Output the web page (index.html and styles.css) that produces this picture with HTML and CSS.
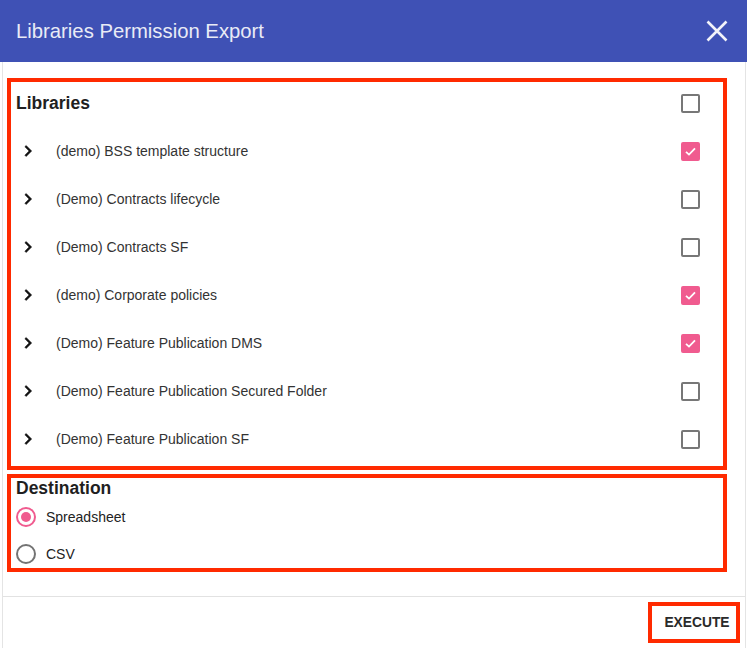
FILE: index.html
```html
<!DOCTYPE html>
<html>
<head>
<meta charset="utf-8">
<link rel="stylesheet" href="styles.css">
</head>
<body>
<div class="dialog">
  <div class="header">
    <span class="title">Libraries Permission Export</span>
    <svg class="close" width="22" height="22" viewBox="0 0 22 22"><path d="M1.5 1.5L20.5 20.5M20.5 1.5L1.5 20.5" stroke="#f2f3fa" stroke-width="2.6" fill="none"/></svg>
  </div>
  <div class="body">
    <div class="content">
      <div class="box libraries">
        <div class="lib-head">
          <span class="heading">Libraries</span>
          <span class="cb"></span>
        </div>
        <div class="row">
          <svg class="chev" width="22" height="22" viewBox="0 0 24 24"><path d="M10 6L8.59 7.41 13.17 12l-4.58 4.59L10 18l6-6z" fill="#111" stroke="#111" stroke-width="0.6"/></svg>
          <span class="label">(demo) BSS template structure</span>
          <span class="cb checked"><svg width="13" height="13" viewBox="0 0 13 13"><path d="M2 6.8L5 9.6L11 3.4" stroke="#fff" stroke-width="1.8" fill="none"/></svg></span>
        </div>
        <div class="row">
          <svg class="chev" width="22" height="22" viewBox="0 0 24 24"><path d="M10 6L8.59 7.41 13.17 12l-4.58 4.59L10 18l6-6z" fill="#111" stroke="#111" stroke-width="0.6"/></svg>
          <span class="label">(Demo) Contracts lifecycle</span>
          <span class="cb"></span>
        </div>
        <div class="row">
          <svg class="chev" width="22" height="22" viewBox="0 0 24 24"><path d="M10 6L8.59 7.41 13.17 12l-4.58 4.59L10 18l6-6z" fill="#111" stroke="#111" stroke-width="0.6"/></svg>
          <span class="label">(Demo) Contracts SF</span>
          <span class="cb"></span>
        </div>
        <div class="row">
          <svg class="chev" width="22" height="22" viewBox="0 0 24 24"><path d="M10 6L8.59 7.41 13.17 12l-4.58 4.59L10 18l6-6z" fill="#111" stroke="#111" stroke-width="0.6"/></svg>
          <span class="label">(demo) Corporate policies</span>
          <span class="cb checked"><svg width="13" height="13" viewBox="0 0 13 13"><path d="M2 6.8L5 9.6L11 3.4" stroke="#fff" stroke-width="1.8" fill="none"/></svg></span>
        </div>
        <div class="row">
          <svg class="chev" width="22" height="22" viewBox="0 0 24 24"><path d="M10 6L8.59 7.41 13.17 12l-4.58 4.59L10 18l6-6z" fill="#111" stroke="#111" stroke-width="0.6"/></svg>
          <span class="label">(Demo) Feature Publication DMS</span>
          <span class="cb checked"><svg width="13" height="13" viewBox="0 0 13 13"><path d="M2 6.8L5 9.6L11 3.4" stroke="#fff" stroke-width="1.8" fill="none"/></svg></span>
        </div>
        <div class="row">
          <svg class="chev" width="22" height="22" viewBox="0 0 24 24"><path d="M10 6L8.59 7.41 13.17 12l-4.58 4.59L10 18l6-6z" fill="#111" stroke="#111" stroke-width="0.6"/></svg>
          <span class="label">(Demo) Feature Publication Secured Folder</span>
          <span class="cb"></span>
        </div>
        <div class="row">
          <svg class="chev" width="22" height="22" viewBox="0 0 24 24"><path d="M10 6L8.59 7.41 13.17 12l-4.58 4.59L10 18l6-6z" fill="#111" stroke="#111" stroke-width="0.6"/></svg>
          <span class="label">(Demo) Feature Publication SF</span>
          <span class="cb"></span>
        </div>
      </div>
      <div class="box destination">
        <div class="dest-head">Destination</div>
        <div class="radio-row first">
          <span class="radio on"></span>
          <span class="rlabel">Spreadsheet</span>
        </div>
        <div class="radio-row second">
          <span class="radio"></span>
          <span class="rlabel">CSV</span>
        </div>
      </div>
    </div>
    <div class="footer">
      <button class="execute">EXECUTE</button>
    </div>
  </div>
</div>
</body>
</html>
```
FILE: styles.css
```css
html, body {
  margin: 0;
  padding: 0;
  background: #fff;
  font-family: "Liberation Sans", Arial, Helvetica, sans-serif;
}
.dialog {
  width: 747px;
  height: 648px;
  display: flex;
  flex-direction: column;
  background: #fff;
}
.header {
  height: 62px;
  flex: none;
  background: #3f51b5;
  display: flex;
  align-items: center;
  justify-content: space-between;
  padding: 0 19px 0 16px;
  box-sizing: border-box;
}
.title {
  color: #e9ebf6;
  font-size: 20.3px;
  line-height: 24px;
}
.close {
  display: block;
}
.body {
  flex: 1;
  margin: 0 1px 0 2px;
  border-left: 1px solid #e4e4e4;
  border-right: 1px solid #e4e4e4;
  display: flex;
  flex-direction: column;
}
.content {
  padding: 16px 18px 24px 4px;
}
.box {
  border: 4px solid #ff2a00;
}
.lib-head {
  height: 42px;
  display: flex;
  align-items: center;
  justify-content: space-between;
  padding: 0 23px 0 5px;
  margin-bottom: 3px;
}
.heading, .dest-head {
  font-weight: bold;
  font-size: 17.5px;
  color: #1f1f1f;
}
.row {
  height: 48px;
  display: flex;
  align-items: center;
  padding: 0 23px 0 6px;
}
.row:last-child {
  margin-bottom: 3px;
}
.chev {
  display: block;
  flex: none;
}
.label {
  flex: 1;
  margin-left: 17px;
  font-size: 14px;
  color: #333;
}
.cb {
  width: 19px;
  height: 19px;
  box-sizing: border-box;
  border: 2px solid #777;
  border-radius: 2px;
  flex: none;
  display: flex;
  align-items: center;
  justify-content: center;
}
.cb.checked {
  background: #f05b8f;
  border-color: #f05b8f;
}
.cb svg {
  display: block;
}
.destination {
  margin-top: 4px;
  padding-left: 5px;
}
.dest-head {
  line-height: 20px;
  height: 20px;
}
.radio-row {
  display: flex;
  align-items: center;
}
.radio-row.first {
  height: 37px;
}
.radio-row.second {
  height: 33px;
  align-items: flex-start;
  box-sizing: border-box;
  padding-top: 9px;
}
.radio {
  width: 20px;
  height: 20px;
  box-sizing: border-box;
  border: 2px solid #737373;
  border-radius: 50%;
  flex: none;
  display: flex;
  align-items: center;
  justify-content: center;
}
.radio.on {
  border-color: #f05b8f;
}
.radio.on::after {
  content: "";
  width: 10px;
  height: 10px;
  border-radius: 50%;
  background: #f05b8f;
}
.rlabel {
  margin-left: 10px;
  font-size: 14px;
  color: #222;
  line-height: 20px;
}
.footer {
  border-top: 1px solid #e2e2e2;
  display: flex;
  justify-content: flex-end;
  padding: 5px 5px 0 0;
}
.execute {
  width: 92px;
  height: 41px;
  box-sizing: border-box;
  border: 4px solid #ff2a00;
  background: #fff;
  font-family: "Liberation Sans", Arial, sans-serif;
  font-weight: bold;
  font-size: 13.8px;
  color: #2a2a2a;
  padding: 0 0 0 6px;
  letter-spacing: 0;
}
```
